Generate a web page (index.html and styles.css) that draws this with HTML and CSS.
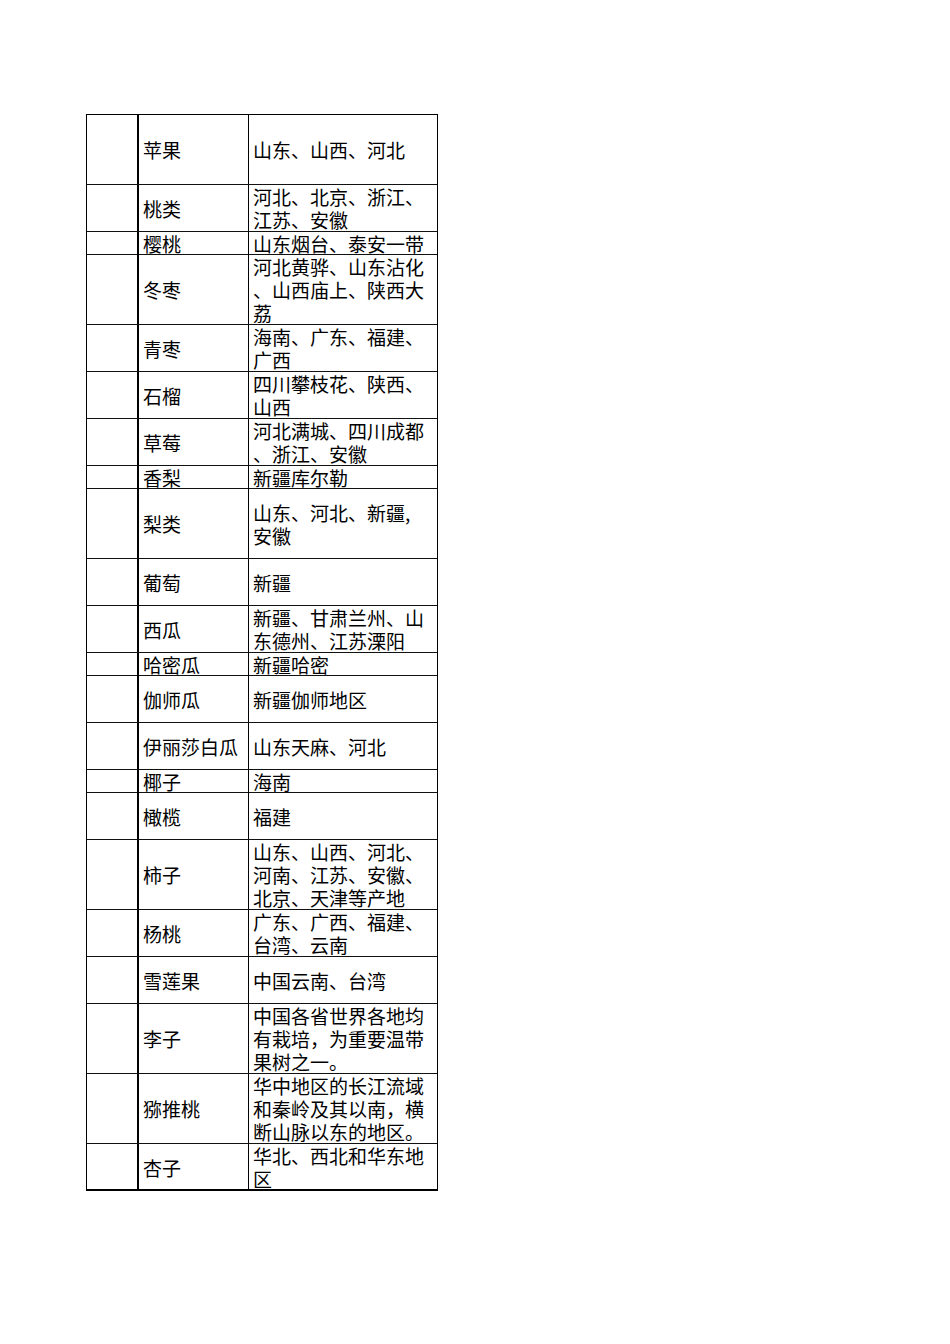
FILE: index.html
```html
<!DOCTYPE html>
<html lang="zh">
<head>
<meta charset="utf-8">
<title>水果产地</title>
<link rel="stylesheet" href="styles.css">
</head>
<body>
<div class="sheet">
  <div class="row h3"><div class="c1"></div><div class="c2">苹果</div><div class="c3">山东、山西、河北</div></div>
  <div class="row h2"><div class="c1"></div><div class="c2">桃类</div><div class="c3">河北、北京、浙江、<br>江苏、安徽</div></div>
  <div class="row h1"><div class="c1"></div><div class="c2">樱桃</div><div class="c3">山东烟台、泰安一带</div></div>
  <div class="row h3"><div class="c1"></div><div class="c2">冬枣</div><div class="c3">河北黄骅、山东沾化<br>、山西庙上、陕西大<br>荔</div></div>
  <div class="row h2"><div class="c1"></div><div class="c2">青枣</div><div class="c3">海南、广东、福建、<br>广西</div></div>
  <div class="row h2"><div class="c1"></div><div class="c2">石榴</div><div class="c3">四川攀枝花、陕西、<br>山西</div></div>
  <div class="row h2"><div class="c1"></div><div class="c2">草莓</div><div class="c3">河北满城、四川成都<br>、浙江、安徽</div></div>
  <div class="row h1"><div class="c1"></div><div class="c2">香梨</div><div class="c3">新疆库尔勒</div></div>
  <div class="row h3"><div class="c1"></div><div class="c2">梨类</div><div class="c3">山东、河北、新疆,<br>安徽</div></div>
  <div class="row h2"><div class="c1"></div><div class="c2">葡萄</div><div class="c3">新疆</div></div>
  <div class="row h2"><div class="c1"></div><div class="c2">西瓜</div><div class="c3">新疆、甘肃兰州、山<br>东德州、江苏溧阳</div></div>
  <div class="row h1"><div class="c1"></div><div class="c2">哈密瓜</div><div class="c3">新疆哈密</div></div>
  <div class="row h2"><div class="c1"></div><div class="c2">伽师瓜</div><div class="c3">新疆伽师地区</div></div>
  <div class="row h2"><div class="c1"></div><div class="c2">伊丽莎白瓜</div><div class="c3">山东天麻、河北</div></div>
  <div class="row h1"><div class="c1"></div><div class="c2">椰子</div><div class="c3">海南</div></div>
  <div class="row h2"><div class="c1"></div><div class="c2">橄榄</div><div class="c3">福建</div></div>
  <div class="row h3"><div class="c1"></div><div class="c2">柿子</div><div class="c3">山东、山西、河北、<br>河南、江苏、安徽、<br>北京、天津等产地</div></div>
  <div class="row h2"><div class="c1"></div><div class="c2">杨桃</div><div class="c3">广东、广西、福建、<br>台湾、云南</div></div>
  <div class="row h2"><div class="c1"></div><div class="c2">雪莲果</div><div class="c3">中国云南、台湾</div></div>
  <div class="row h3"><div class="c1"></div><div class="c2">李子</div><div class="c3">中国各省世界各地均<br>有栽培，为重要温带<br>果树之一。</div></div>
  <div class="row h3"><div class="c1"></div><div class="c2">猕推桃</div><div class="c3">华中地区的长江流域<br>和秦岭及其以南，横<br>断山脉以东的地区。</div></div>
  <div class="row h2 last"><div class="c1"></div><div class="c2">杏子</div><div class="c3">华北、西北和华东地<br>区</div></div>
</div>
</body>
</html>
```
FILE: styles.css
```css
html, body {
  margin: 0;
  padding: 0;
  background: #ffffff;
}

body {
  font-family: "Noto Sans CJK SC", "Liberation Serif", sans-serif;
  font-size: 19px;
  line-height: 23px;
  color: #000000;
}

.sheet {
  margin: 114px 0 0 86px;
  width: 352px;
  box-sizing: border-box;
  border-top: 1px solid #000;
  border-left: 1px solid #000;
  border-right: 1px solid #000;
}

.row {
  display: grid;
  grid-template-columns: 52px 110px 188px;
  box-sizing: border-box;
  border-bottom: 1px solid #111;
}

.row.last {
  border-bottom: 2px solid #000;
}

.h1 { height: 23px; }
.h2 { height: 47px; }
.h3 { height: 70px; }

.c1, .c2, .c3 {
  display: flex;
  flex-direction: column;
  justify-content: center;
  padding-left: 4px;
  box-sizing: border-box;
  white-space: nowrap;
}

.c1 {
  border-right: 2px solid #000;
}

.c2 {
  border-right: 1px solid #000;
}

.c3 {
  display: block;
  align-self: center;
}
```
